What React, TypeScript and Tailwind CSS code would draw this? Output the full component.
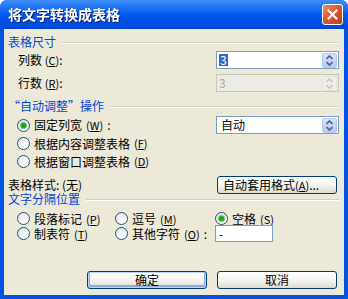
import React from 'react';

const font = { fontFamily: '"Noto Sans CJK SC", "Liberation Sans", sans-serif' };

const Key = ({ k }: { k: string }) => (
  <span className="text-[11px]">
    (<span className="underline underline-offset-1">{k}</span>)
  </span>
);

const Radio = ({ checked = false }: { checked?: boolean }) => (
  <span className="w-[13px] h-[13px] rounded-full border border-[#1c5180] bg-gradient-to-br from-[#dcdcd7] via-[#f6f6f4] to-white flex items-center justify-center shrink-0">
    {checked && <span className="w-[5px] h-[5px] rounded-full bg-[#21a121] shadow-[0_0_1px_1px_#63c763]" />}
  </span>
);

const Header = ({ text }: { text: string }) => (
  <div className="flex items-center h-[16px] gap-[6px]">
    <span className="text-[#0046d5] text-[12px] leading-none whitespace-nowrap">{text}</span>
    <div className="flex-1 flex flex-col mt-[1px]">
      <div className="h-px bg-[#d0d0bf]" />
      <div className="h-px bg-white" />
    </div>
  </div>
);

const Spin = ({ disabled = false }: { disabled?: boolean }) => (
  <div
    className={
      'w-[15px] h-[15px] rounded-[2px] flex flex-col items-center justify-center mr-px ' +
      (disabled ? 'bg-[#f0efe8] border border-[#e2e1d8]' : 'bg-gradient-to-b from-[#d7e3fc] to-[#b3c8f4] border border-[#b6caf5]')
    }
  >
    <svg width="7" height="11" viewBox="0 0 7 11">
      <path d="M0.5 4 L3.5 1 L6.5 4" fill="none" stroke={disabled ? '#c8c7bf' : '#4d6185'} strokeWidth="1.6" />
      <path d="M0.5 7 L3.5 10 L6.5 7" fill="none" stroke={disabled ? '#c8c7bf' : '#4d6185'} strokeWidth="1.6" />
    </svg>
  </div>
);

const Field = ({ children, disabled = false }: { children: React.ReactNode; disabled?: boolean }) => (
  <div
    className={
      'w-[123px] h-[18px] border flex items-center justify-between pl-[2px] ' +
      (disabled ? 'border-[#c9c7ba] bg-[#ecebe4]' : 'border-[#7f9db9] bg-white')
    }
  >
    <div className="flex items-center text-[12px] leading-none">{children}</div>
    <Spin disabled={disabled} />
  </div>
);

const Button = ({ children, focused = false, wide = false }: { children: React.ReactNode; focused?: boolean; wide?: boolean }) => (
  <div
    className={
      'h-[18px] rounded-[3px] border border-[#003c74] bg-gradient-to-b from-white via-[#f4f4f0] to-[#dedcd2] flex items-center text-[12px] leading-none ' +
      (wide ? 'w-[120px] justify-start pl-[5px]' : 'w-[120px] justify-center') +
      (focused ? ' shadow-[inset_0_0_0_1px_#bcd4f6,inset_0_-1px_0_2px_#89ade4]' : '')
    }
  >
    {children}
  </div>
);

export default function App() {
  return (
    <div style={font} className="w-[348px] h-[299px] flex flex-col bg-[#0054e3] rounded-t-[7px] overflow-hidden text-black">
      <div className="h-[29px] shrink-0 flex items-center justify-between pl-[8px] pr-[5px] bg-gradient-to-b from-[#3d8ef8] via-[#0058ee] to-[#0047d8]">
        <span className="text-white font-bold text-[14px] drop-shadow-[1px_1px_0_#0a246a]">将文字转换成表格</span>
        <div className="w-[21px] h-[21px] rounded-[3px] border border-white bg-gradient-to-br from-[#e98c68] via-[#d8572f] to-[#c2381c] flex items-center justify-center">
          <svg width="11" height="11" viewBox="0 0 11 11">
            <path d="M1.5 1.5 L9.5 9.5 M9.5 1.5 L1.5 9.5" stroke="white" strokeWidth="2.2" strokeLinecap="square" />
          </svg>
        </div>
      </div>
      <div className="flex-1 ml-[4px] mr-[4px] mb-[4px] bg-[#ece9d8] pl-[4px] pr-[5px] pt-[5px] flex flex-col text-[12px] leading-none">
        <Header text="表格尺寸" />
        <div className="flex items-center justify-between h-[18px] mt-[1px] pl-[10px]">
          <span>列数 <Key k="C" />:</span>
          <Field>
            <span className="bg-[#316ac5] text-white px-px">3</span>
          </Field>
        </div>
        <div className="flex items-center justify-between h-[18px] mt-[5px] pl-[10px]">
          <span>行数 <Key k="R" />:</span>
          <Field disabled>
            <span className="text-[#aca899]">3</span>
          </Field>
        </div>
        <div className="mt-[6px]">
          <Header text="“自动调整”操作" />
        </div>
        <div className="flex items-center justify-between h-[18px] mt-[2px] pl-[9px]">
          <span className="flex items-center gap-[4px]">
            <Radio checked />
            固定列宽 <Key k="W" />:
          </span>
          <Field>
            <span className="pl-[2px]">自动</span>
          </Field>
        </div>
        <div className="flex items-center h-[17px] mt-[1px] pl-[9px] gap-[4px]">
          <Radio />
          根据内容调整表格 <Key k="F" />
        </div>
        <div className="flex items-center h-[17px] mt-[1px] pl-[9px] gap-[4px]">
          <Radio />
          根据窗口调整表格 <Key k="D" />
        </div>
        <div className="flex items-center justify-between h-[18px] mt-[6px]">
          <span>表格样式: (无)</span>
          <div className="mr-[2px]">
            <Button wide>
              自动套用格式 <Key k="A" />...
            </Button>
          </div>
        </div>
        <div className="mt-[-3px]">
          <Header text="文字分隔位置" />
        </div>
        <div className="grid grid-cols-[98px_100px_1fr] mt-[4px] pl-[9px] leading-[12px]">
          <div className="flex items-center h-[15px] gap-[4px]">
            <Radio />
            段落标记 <Key k="P" />
          </div>
          <div className="flex items-center h-[15px] gap-[4px]">
            <Radio />
            逗号 <Key k="M" />
          </div>
          <div className="flex items-center h-[15px] gap-[4px]">
            <Radio checked />
            空格 <Key k="S" />
          </div>
          <div className="flex items-center h-[15px] gap-[4px]">
            <Radio />
            制表符 <Key k="T" />
          </div>
          <div className="flex items-center h-[15px] gap-[4px]">
            <Radio />
            其他字符 <Key k="O" />:
          </div>
          <div className="flex items-center h-[15px]">
            <div className="w-[58px] h-[17px] shrink-0 border border-[#7f9db9] bg-white pl-[3px] flex items-center">-</div>
          </div>
        </div>
        <div className="flex-1" />
        <div className="flex justify-end gap-[10px] pr-[2px] mb-[6px]">
          <Button focused>确定</Button>
          <Button>取消</Button>
        </div>
      </div>
    </div>
  );
}
